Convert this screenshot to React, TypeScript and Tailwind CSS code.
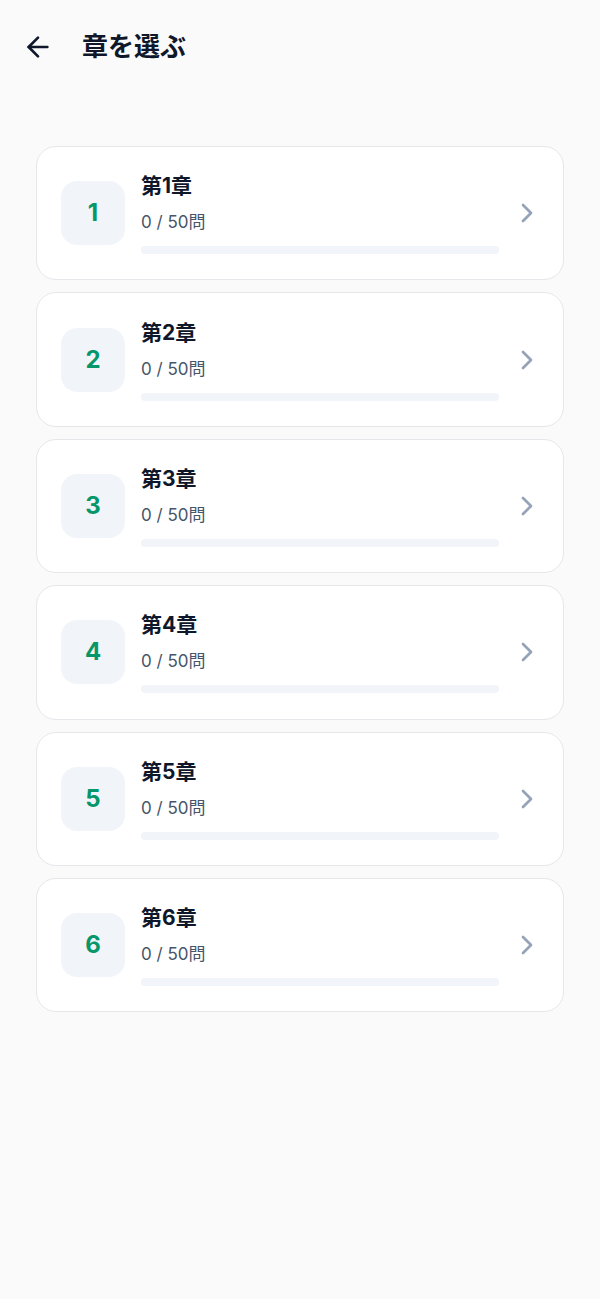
import { ArrowLeft, ChevronRight } from "lucide-react";

const chapters = [1, 2, 3, 4, 5, 6].map((n) => ({
    id: n,
    title: `第${n}章`,
    done: 0,
    total: 50,
}));

export default function App() {
    return (
        <div
            className="min-h-[1299px] w-full bg-[#fafafa] text-[#0f172a]"
            style={{ fontFamily: 'Inter, "Noto Sans CJK JP", sans-serif' }}
        >
            {/* Header */}
            <header className="flex h-[94px] items-center pl-[22px]">
                <button className="flex h-8 w-8 items-center justify-center text-[#0f172a]">
                    <ArrowLeft size={32} strokeWidth={2} />
                </button>
                <h1 className="ml-[28px] text-[26px] font-bold leading-none">章を選ぶ</h1>
            </header>

            {/* Chapter list */}
            <div className="flex flex-col gap-3 px-9 pt-[52px]">
                {chapters.map((ch) => (
                    <div
                        key={ch.id}
                        className="flex h-[134.4px] items-center rounded-[20px] border border-[#e5e7eb] bg-white pl-6 pr-5"
                    >
                        <div className="flex h-16 w-16 shrink-0 items-center justify-center rounded-2xl bg-[#f1f5f9]">
                            <span className="text-2xl font-bold text-[#059669]">{ch.id}</span>
                        </div>

                        <div className="ml-4 flex flex-1 flex-col">
                            <h2 className="text-[21px] font-bold leading-7">{ch.title}</h2>
                            <p className="mt-[10px] text-[17px] leading-6 text-[#475569]">
                                {ch.done} / {ch.total}問
                            </p>
                            <div className="mt-3 h-2 w-full overflow-hidden rounded-full bg-[#f1f5f9]">
                                <div
                                    className="h-full rounded-full bg-[#059669]"
                                    style={{ width: `${(ch.done / ch.total) * 100}%` }}
                                />
                            </div>
                        </div>

                        <ChevronRight size={32} strokeWidth={2} className="ml-3 shrink-0 text-[#94a3b8]" />
                    </div>
                ))}
            </div>
        </div>
    );
}
